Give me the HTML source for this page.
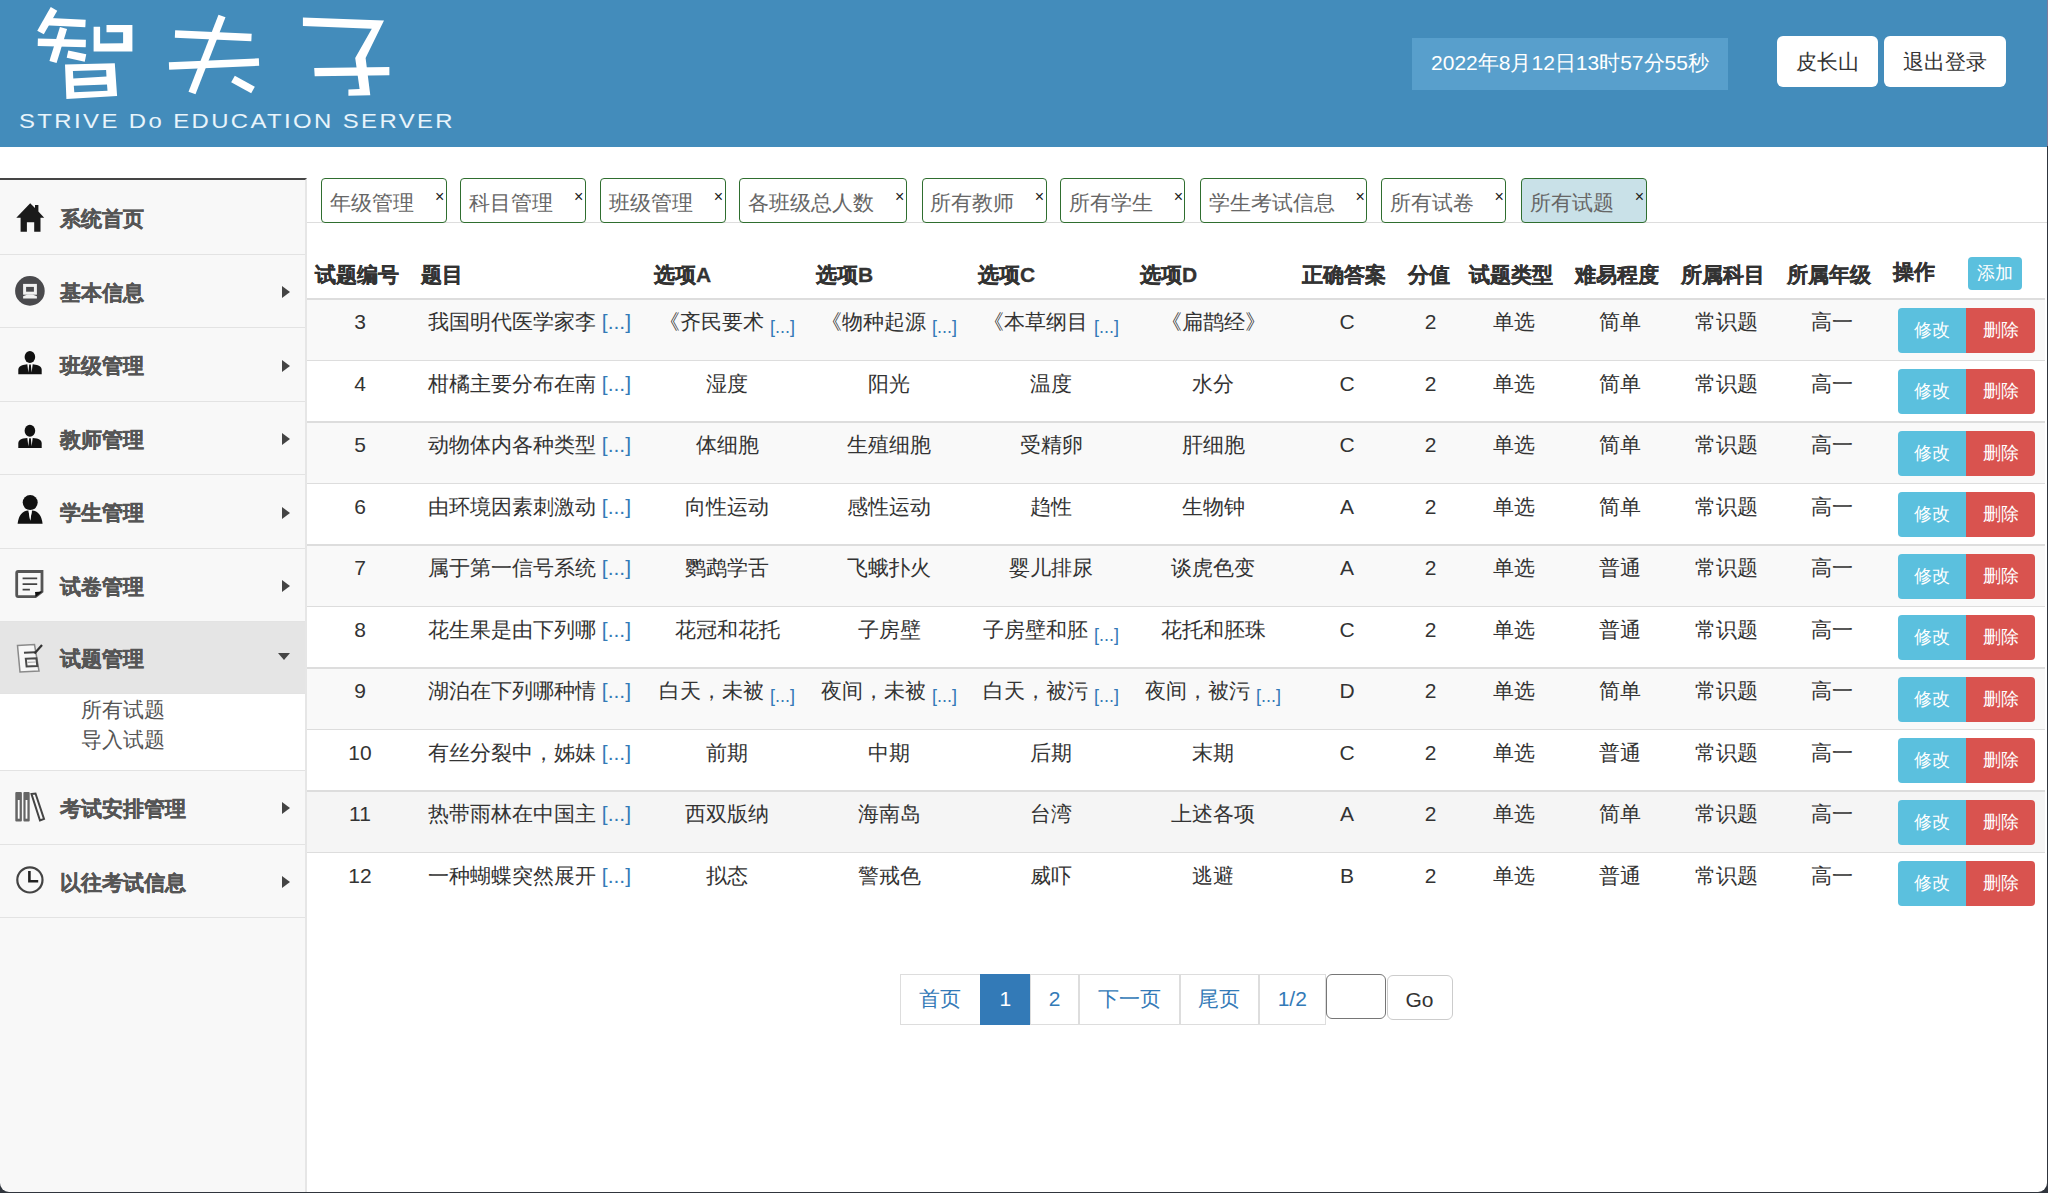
<!DOCTYPE html>
<html><head><meta charset="utf-8"><title>试题管理</title>
<style>
*{box-sizing:border-box;margin:0;padding:0}
html,body{width:2048px;height:1193px;overflow:hidden;background:#fff}
body{position:relative;font-family:"Liberation Sans",sans-serif;color:#333;font-size:21px}
.a{position:absolute}
.hdr{left:0;top:0;width:2048px;height:146.6px;background:#438cbb}
.datebox{left:1412px;top:38px;width:316px;height:52px;background:#589fcc;color:#fff;font-size:21px;line-height:50px;text-align:center;white-space:nowrap}
.hbtn{top:36px;height:51px;background:#fff;border-radius:6px;color:#333;font-size:21px;line-height:51px;text-align:center;white-space:nowrap}
.side{left:0;top:178px;width:307px;height:1015px;background:#f8f8f8;border-top:2px solid #454545;border-right:2px solid #e6e6e6}
.mi{left:0;width:305px;height:74px;border-bottom:1px solid #e3e3e3}
.mt{position:absolute;left:60px;top:1px;line-height:74px;font-weight:bold;color:#555;font-size:21px;white-space:nowrap;-webkit-text-stroke:0.35px #555}
.tri{position:absolute;left:282px;width:0;height:0;border-top:6px solid transparent;border-bottom:6px solid transparent;border-left:8px solid #444}
.sub{left:81px;color:#555;font-size:21px;line-height:30px;white-space:nowrap}
.tab{top:178px;height:45px;border:1.5px solid #2f6e2f;border-radius:4px;background:#fff;color:#666;font-size:21px;line-height:42px;white-space:nowrap}
.tab span{position:absolute;left:7.5px;top:3px}
.tab i{position:absolute;right:1.5px;top:8px;font-style:normal;color:#222;font-size:16px;line-height:20px}
.th{top:255px;line-height:40px;font-weight:bold;color:#333;font-size:21px;white-space:nowrap;-webkit-text-stroke:0.3px #333}
.cell{line-height:30px;text-align:center;white-space:nowrap;color:#333}
.lk{color:#337ab7}
.btn{height:45px;color:#fff;font-size:18px;line-height:45px;text-align:center;white-space:nowrap}
.pg{top:974px;height:50.5px;border:1px solid #ddd;color:#337ab7;font-size:21px;line-height:48px;text-align:center;white-space:nowrap;background:#fff}
</style></head><body>

<div class="a hdr"></div>
<svg class="a" style="left:0;top:0" width="480" height="146" viewBox="0 0 480 146">
<g fill="none" stroke="#fff" stroke-width="7.5" stroke-linecap="butt" stroke-linejoin="miter">
<path d="M54,8.8 L40.5,32.5"/>
<path d="M45,21.5 L85.5,23.5"/>
<path d="M37.8,42.2 L85.8,43.5"/>
<path d="M63.5,28 L53,62"/>
<path d="M67.5,54.2 L85.5,58"/>
<path d="M175,34 L251.5,37.5"/>
<path d="M169,66 L259,62"/>
<path d="M222,16 L192,93"/>
<path d="M233,79 L253,90"/>
</g>
<g fill="#fff">
<path fill-rule="evenodd" d="M65,64.5 L114.8,63.2 L117.1,95.9 L66.4,99.1 Z M72.9,71 L106.1,70.1 L106.5,76.5 L73.3,78.4 Z M73.8,85.8 L107,84.4 L107.5,90.8 L74.3,92.2 Z"/>
<path d="M93.6,26.7 L100.1,26.7 L100.1,43.5 L123.1,43.3 L123.1,32.3 L106.5,32.3 L106.5,24.9 L132.4,24.9 L132.4,51.6 L93.6,51.6 Z"/>
<path d="M302.9,17.6 L384,20.5 L365.6,58.1 L370.3,95.2 L348.4,95.7 L348.4,89.6 L359.6,88.9 L355.2,58.1 L371.8,28.8 L302.9,25.9 Z"/>
<path d="M314.2,67.9 L389.4,66.9 L389.4,75.2 L314.7,76.2 Z"/>

</g>
<text x="19" y="127.5" fill="#e8f4fb" font-family="Liberation Sans" font-size="20" textLength="436" lengthAdjust="spacingAndGlyphs" letter-spacing="2">STRIVE Do EDUCATION SERVER</text>
</svg>
<div class="a datebox">2022年8月12日13时57分55秒</div>
<div class="a hbtn" style="left:1777px;width:101px">皮长山</div>
<div class="a hbtn" style="left:1884px;width:122px">退出登录</div>
<div class="a side"></div>
<div class="a mi" style="top:181px;height:74px;"><div class="mt" style="line-height:74px">系统首页</div>
</div>
<div class="a mi" style="top:255px;height:73px;"><div class="mt" style="line-height:73px">基本信息</div>
<div class="tri" style="top:31.0px"></div>
</div>
<div class="a mi" style="top:328px;height:74px;"><div class="mt" style="line-height:74px">班级管理</div>
<div class="tri" style="top:31.5px"></div>
</div>
<div class="a mi" style="top:402px;height:73px;"><div class="mt" style="line-height:73px">教师管理</div>
<div class="tri" style="top:31.0px"></div>
</div>
<div class="a mi" style="top:475px;height:74px;"><div class="mt" style="line-height:74px">学生管理</div>
<div class="tri" style="top:31.5px"></div>
</div>
<div class="a mi" style="top:549px;height:73px;"><div class="mt" style="line-height:73px">试卷管理</div>
<div class="tri" style="top:31.0px"></div>
</div>
<div class="a mi" style="top:622px;height:72px;background:#e5e5e5;"><div class="mt" style="line-height:72px">试题管理</div>
<div class="tri" style="left:278px;top:31.0px;border-left:6px solid transparent;border-right:6px solid transparent;border-top:7px solid #444;border-bottom:0"></div>
</div>
<div class="a mi" style="top:771px;height:73.5px;"><div class="mt" style="line-height:73.5px">考试安排管理</div>
<div class="tri" style="top:31.25px"></div>
</div>
<div class="a mi" style="top:844.5px;height:73.5px;"><div class="mt" style="line-height:73.5px">以往考试信息</div>
<div class="tri" style="top:31.25px"></div>
</div>
<div class="a" style="left:0;top:694px;width:305px;height:77px;background:#fff;border-bottom:1px solid #e3e3e3"></div>
<div class="a sub" style="top:695px">所有试题</div>
<div class="a sub" style="top:725px">导入试题</div>
<svg class="a" style="left:0;top:0" width="60" height="930" viewBox="0 0 60 930">
<path fill="#1a1a1a" d="M16.3,217.7 L30.2,203.3 L35,208 L35,205 L38.4,205 L38.4,211.5 L44.2,217.7 L40.5,217.7 L40.5,231.7 L34.2,231.7 L34.2,222.2 L26.9,222.2 L26.9,231.7 L20.6,231.7 L20.6,217.7 Z"/>
<circle cx="29.9" cy="290.9" r="14.8" fill="#4a4a4d"/>
<rect x="24.6" y="285.4" width="10.8" height="7.8" fill="none" stroke="#f0f0f0" stroke-width="3"/>
<path fill="#f0f0f0" d="M27.5,294.5 L32.5,294.5 L36.9,296.3 L36.9,298.6 L23.1,298.6 L23.1,296.3 Z"/>
<g fill="#111">
<ellipse cx="29.9" cy="357.1" rx="5.3" ry="6"/>
<path d="M18.3,374.3 L18.3,369.5 Q18.5,366 23,365 L27.3,364.3 L28.6,374.3 Z M29.2,364.6 L30.8,364.6 L31.8,374.3 L28.2,374.3 Z M32.7,364.3 L37,365 Q41.5,366 41.7,369.5 L41.7,374.3 L31.4,374.3 Z"/>
<ellipse cx="29.9" cy="430.7" rx="5.3" ry="6"/>
<path d="M18.3,447.9 L18.3,443.1 Q18.5,439.6 23,438.6 L27.3,437.9 L28.6,447.9 Z M29.2,438.2 L30.8,438.2 L31.8,447.9 L28.2,447.9 Z M32.7,437.9 L37,438.6 Q41.5,439.6 41.7,443.1 L41.7,447.9 L31.4,447.9 Z"/>
<circle cx="30.2" cy="502.6" r="7.5"/>
<path d="M17.6,523.8 Q19,511 28.4,510.4 L30.2,520.8 L32,510.4 Q41.2,511 42.6,523.8 Z"/>
</g>
<path fill="#fff" d="M28.7,511.3 L31.7,511.3 L30.2,520.5 Z"/>
<g fill="none" stroke="#555" stroke-width="2.8">
<path d="M16.7,573 Q16.7,571.5 18.2,571.5 L42,571.5 L42,591.5 L35.5,596.6 L18.2,596.6 Q16.7,596.6 16.7,595 Z"/>
</g>
<path fill="#111" d="M35,592 L42.5,591.5 L35.6,597 Z"/>
<g stroke="#444" stroke-width="1.8"><path d="M22.6,578.4 L37.2,578.4 M22.6,584.2 L37.2,584.2 M22.6,589.7 L29.9,589.7"/></g>
<path d="M17.5,645.5 L34.5,644.5 L39,671 L20,672 Z" fill="#f7f7f7" stroke="#8a8a8a" stroke-width="1.5"/>
<path d="M24,652.8 L35,652.3" stroke="#444" stroke-width="2"/>
<path d="M25.8,658.8 L36.4,658.3 L37.3,666 L26.6,666.5 Z" fill="none" stroke="#4a4a4a" stroke-width="2"/>
<path d="M27.5,662.3 L35.8,662" stroke="#aaa" stroke-width="1.2"/>
<path d="M42,645 L34.5,653.5" stroke="#333" stroke-width="2.2"/>
<g fill="#666">
<rect x="15.3" y="792.1" width="6.6" height="29.4" rx="1"/>
<rect x="23.4" y="792.1" width="6.3" height="29.4" rx="1"/>
</g>
<g fill="#fff"><rect x="17.8" y="800" width="1.8" height="18.7"/><rect x="25.6" y="800" width="1.8" height="18.7"/></g>
<path d="M31.5,794 L35.5,793.5 L44,819 L40,820.5 Z" fill="none" stroke="#444" stroke-width="2"/>
<circle cx="29.9" cy="879.9" r="12.6" fill="none" stroke="#444" stroke-width="2.2"/>
<path d="M29.4,871.1 L29.4,881.3 L38.2,881.3" fill="none" stroke="#222" stroke-width="2.6"/>
</svg>
<div class="a" style="left:307px;top:221.5px;width:1741px;height:1.5px;background:#ddd"></div>
<div class="a tab" style="left:321.2px;width:125.69999999999999px;"><span>年级管理</span><i>×</i></div>
<div class="a tab" style="left:460.3px;width:125.49999999999994px;"><span>科目管理</span><i>×</i></div>
<div class="a tab" style="left:600.4px;width:125.20000000000005px;"><span>班级管理</span><i>×</i></div>
<div class="a tab" style="left:739.3px;width:167.5px;"><span>各班级总人数</span><i>×</i></div>
<div class="a tab" style="left:921.5px;width:125.0px;"><span>所有教师</span><i>×</i></div>
<div class="a tab" style="left:1060.2px;width:125.29999999999995px;"><span>所有学生</span><i>×</i></div>
<div class="a tab" style="left:1200.4px;width:167.0px;"><span>学生考试信息</span><i>×</i></div>
<div class="a tab" style="left:1381.4px;width:125.0px;"><span>所有试卷</span><i>×</i></div>
<div class="a tab" style="left:1521.3px;width:125.40000000000009px;background:#c9e1e8;"><span>所有试题</span><i>×</i></div>
<div class="a th" style="left:315px">试题编号</div>
<div class="a th" style="left:421px">题目</div>
<div class="a th" style="left:654px">选项A</div>
<div class="a th" style="left:816px">选项B</div>
<div class="a th" style="left:978px">选项C</div>
<div class="a th" style="left:1140px">选项D</div>
<div class="a th" style="left:1302px">正确答案</div>
<div class="a th" style="left:1408px">分值</div>
<div class="a th" style="left:1469px">试题类型</div>
<div class="a th" style="left:1575px">难易程度</div>
<div class="a th" style="left:1681px">所属科目</div>
<div class="a th" style="left:1787px">所属年级</div>
<div class="a th" style="left:1893px;top:252px">操作</div>
<div class="a btn" style="left:1968px;top:257px;width:54px;height:33px;line-height:33px;background:#5bc0de;border-radius:4px">添加</div>
<div class="a" style="left:307px;top:297.5px;width:1738px;height:2px;background:#ddd"></div>
<div class="a" style="left:307px;top:299.5px;width:1738px;height:61.5px;background:#f9f9f9"></div>
<div class="a" style="left:307px;top:359.5px;width:1738px;height:1.5px;background:#ddd"></div>
<div class="a cell" style="left:307px;top:307.0px;width:106px">3</div>
<div class="a cell" style="left:413px;top:307.0px;width:233px">我国明代医学家李 <span class="lk">[...]</span></div>
<div class="a cell" style="left:646px;top:307.0px;width:162px">《齐民要术 <span class="lk" style="font-size:18px;position:relative;top:4px">[...]</span></div>
<div class="a cell" style="left:808px;top:307.0px;width:162px">《物种起源 <span class="lk" style="font-size:18px;position:relative;top:4px">[...]</span></div>
<div class="a cell" style="left:970px;top:307.0px;width:162px">《本草纲目 <span class="lk" style="font-size:18px;position:relative;top:4px">[...]</span></div>
<div class="a cell" style="left:1132px;top:307.0px;width:162px">《扁鹊经》</div>
<div class="a cell" style="left:1294px;top:307.0px;width:106px">C</div>
<div class="a cell" style="left:1400px;top:307.0px;width:61px">2</div>
<div class="a cell" style="left:1461px;top:307.0px;width:106px">单选</div>
<div class="a cell" style="left:1567px;top:307.0px;width:106px">简单</div>
<div class="a cell" style="left:1673px;top:307.0px;width:106px">常识题</div>
<div class="a cell" style="left:1779px;top:307.0px;width:106px">高一</div>
<div class="a btn" style="left:1898px;top:307.75px;width:68px;background:#5bc0de;border-radius:4px 0 0 4px">修改</div>
<div class="a btn" style="left:1966px;top:307.75px;width:69px;background:#d9534f;border-radius:0 4px 4px 0">删除</div>
<div class="a" style="left:307px;top:361.0px;width:1738px;height:61.5px;background:#fff"></div>
<div class="a" style="left:307px;top:421.0px;width:1738px;height:1.5px;background:#ddd"></div>
<div class="a cell" style="left:307px;top:368.5px;width:106px">4</div>
<div class="a cell" style="left:413px;top:368.5px;width:233px">柑橘主要分布在南 <span class="lk">[...]</span></div>
<div class="a cell" style="left:646px;top:368.5px;width:162px">湿度</div>
<div class="a cell" style="left:808px;top:368.5px;width:162px">阳光</div>
<div class="a cell" style="left:970px;top:368.5px;width:162px">温度</div>
<div class="a cell" style="left:1132px;top:368.5px;width:162px">水分</div>
<div class="a cell" style="left:1294px;top:368.5px;width:106px">C</div>
<div class="a cell" style="left:1400px;top:368.5px;width:61px">2</div>
<div class="a cell" style="left:1461px;top:368.5px;width:106px">单选</div>
<div class="a cell" style="left:1567px;top:368.5px;width:106px">简单</div>
<div class="a cell" style="left:1673px;top:368.5px;width:106px">常识题</div>
<div class="a cell" style="left:1779px;top:368.5px;width:106px">高一</div>
<div class="a btn" style="left:1898px;top:369.25px;width:68px;background:#5bc0de;border-radius:4px 0 0 4px">修改</div>
<div class="a btn" style="left:1966px;top:369.25px;width:69px;background:#d9534f;border-radius:0 4px 4px 0">删除</div>
<div class="a" style="left:307px;top:422.5px;width:1738px;height:61.5px;background:#f9f9f9"></div>
<div class="a" style="left:307px;top:482.5px;width:1738px;height:1.5px;background:#ddd"></div>
<div class="a cell" style="left:307px;top:430.0px;width:106px">5</div>
<div class="a cell" style="left:413px;top:430.0px;width:233px">动物体内各种类型 <span class="lk">[...]</span></div>
<div class="a cell" style="left:646px;top:430.0px;width:162px">体细胞</div>
<div class="a cell" style="left:808px;top:430.0px;width:162px">生殖细胞</div>
<div class="a cell" style="left:970px;top:430.0px;width:162px">受精卵</div>
<div class="a cell" style="left:1132px;top:430.0px;width:162px">肝细胞</div>
<div class="a cell" style="left:1294px;top:430.0px;width:106px">C</div>
<div class="a cell" style="left:1400px;top:430.0px;width:61px">2</div>
<div class="a cell" style="left:1461px;top:430.0px;width:106px">单选</div>
<div class="a cell" style="left:1567px;top:430.0px;width:106px">简单</div>
<div class="a cell" style="left:1673px;top:430.0px;width:106px">常识题</div>
<div class="a cell" style="left:1779px;top:430.0px;width:106px">高一</div>
<div class="a btn" style="left:1898px;top:430.75px;width:68px;background:#5bc0de;border-radius:4px 0 0 4px">修改</div>
<div class="a btn" style="left:1966px;top:430.75px;width:69px;background:#d9534f;border-radius:0 4px 4px 0">删除</div>
<div class="a" style="left:307px;top:484.0px;width:1738px;height:61.5px;background:#fff"></div>
<div class="a" style="left:307px;top:544.0px;width:1738px;height:1.5px;background:#ddd"></div>
<div class="a cell" style="left:307px;top:491.5px;width:106px">6</div>
<div class="a cell" style="left:413px;top:491.5px;width:233px">由环境因素刺激动 <span class="lk">[...]</span></div>
<div class="a cell" style="left:646px;top:491.5px;width:162px">向性运动</div>
<div class="a cell" style="left:808px;top:491.5px;width:162px">感性运动</div>
<div class="a cell" style="left:970px;top:491.5px;width:162px">趋性</div>
<div class="a cell" style="left:1132px;top:491.5px;width:162px">生物钟</div>
<div class="a cell" style="left:1294px;top:491.5px;width:106px">A</div>
<div class="a cell" style="left:1400px;top:491.5px;width:61px">2</div>
<div class="a cell" style="left:1461px;top:491.5px;width:106px">单选</div>
<div class="a cell" style="left:1567px;top:491.5px;width:106px">简单</div>
<div class="a cell" style="left:1673px;top:491.5px;width:106px">常识题</div>
<div class="a cell" style="left:1779px;top:491.5px;width:106px">高一</div>
<div class="a btn" style="left:1898px;top:492.25px;width:68px;background:#5bc0de;border-radius:4px 0 0 4px">修改</div>
<div class="a btn" style="left:1966px;top:492.25px;width:69px;background:#d9534f;border-radius:0 4px 4px 0">删除</div>
<div class="a" style="left:307px;top:545.5px;width:1738px;height:61.5px;background:#f9f9f9"></div>
<div class="a" style="left:307px;top:605.5px;width:1738px;height:1.5px;background:#ddd"></div>
<div class="a cell" style="left:307px;top:553.0px;width:106px">7</div>
<div class="a cell" style="left:413px;top:553.0px;width:233px">属于第一信号系统 <span class="lk">[...]</span></div>
<div class="a cell" style="left:646px;top:553.0px;width:162px">鹦鹉学舌</div>
<div class="a cell" style="left:808px;top:553.0px;width:162px">飞蛾扑火</div>
<div class="a cell" style="left:970px;top:553.0px;width:162px">婴儿排尿</div>
<div class="a cell" style="left:1132px;top:553.0px;width:162px">谈虎色变</div>
<div class="a cell" style="left:1294px;top:553.0px;width:106px">A</div>
<div class="a cell" style="left:1400px;top:553.0px;width:61px">2</div>
<div class="a cell" style="left:1461px;top:553.0px;width:106px">单选</div>
<div class="a cell" style="left:1567px;top:553.0px;width:106px">普通</div>
<div class="a cell" style="left:1673px;top:553.0px;width:106px">常识题</div>
<div class="a cell" style="left:1779px;top:553.0px;width:106px">高一</div>
<div class="a btn" style="left:1898px;top:553.75px;width:68px;background:#5bc0de;border-radius:4px 0 0 4px">修改</div>
<div class="a btn" style="left:1966px;top:553.75px;width:69px;background:#d9534f;border-radius:0 4px 4px 0">删除</div>
<div class="a" style="left:307px;top:607.0px;width:1738px;height:61.5px;background:#fff"></div>
<div class="a" style="left:307px;top:667.0px;width:1738px;height:1.5px;background:#ddd"></div>
<div class="a cell" style="left:307px;top:614.5px;width:106px">8</div>
<div class="a cell" style="left:413px;top:614.5px;width:233px">花生果是由下列哪 <span class="lk">[...]</span></div>
<div class="a cell" style="left:646px;top:614.5px;width:162px">花冠和花托</div>
<div class="a cell" style="left:808px;top:614.5px;width:162px">子房壁</div>
<div class="a cell" style="left:970px;top:614.5px;width:162px">子房壁和胚 <span class="lk" style="font-size:18px;position:relative;top:4px">[...]</span></div>
<div class="a cell" style="left:1132px;top:614.5px;width:162px">花托和胚珠</div>
<div class="a cell" style="left:1294px;top:614.5px;width:106px">C</div>
<div class="a cell" style="left:1400px;top:614.5px;width:61px">2</div>
<div class="a cell" style="left:1461px;top:614.5px;width:106px">单选</div>
<div class="a cell" style="left:1567px;top:614.5px;width:106px">普通</div>
<div class="a cell" style="left:1673px;top:614.5px;width:106px">常识题</div>
<div class="a cell" style="left:1779px;top:614.5px;width:106px">高一</div>
<div class="a btn" style="left:1898px;top:615.25px;width:68px;background:#5bc0de;border-radius:4px 0 0 4px">修改</div>
<div class="a btn" style="left:1966px;top:615.25px;width:69px;background:#d9534f;border-radius:0 4px 4px 0">删除</div>
<div class="a" style="left:307px;top:668.5px;width:1738px;height:61.5px;background:#f9f9f9"></div>
<div class="a" style="left:307px;top:728.5px;width:1738px;height:1.5px;background:#ddd"></div>
<div class="a cell" style="left:307px;top:676.0px;width:106px">9</div>
<div class="a cell" style="left:413px;top:676.0px;width:233px">湖泊在下列哪种情 <span class="lk">[...]</span></div>
<div class="a cell" style="left:646px;top:676.0px;width:162px">白天，未被 <span class="lk" style="font-size:18px;position:relative;top:4px">[...]</span></div>
<div class="a cell" style="left:808px;top:676.0px;width:162px">夜间，未被 <span class="lk" style="font-size:18px;position:relative;top:4px">[...]</span></div>
<div class="a cell" style="left:970px;top:676.0px;width:162px">白天，被污 <span class="lk" style="font-size:18px;position:relative;top:4px">[...]</span></div>
<div class="a cell" style="left:1132px;top:676.0px;width:162px">夜间，被污 <span class="lk" style="font-size:18px;position:relative;top:4px">[...]</span></div>
<div class="a cell" style="left:1294px;top:676.0px;width:106px">D</div>
<div class="a cell" style="left:1400px;top:676.0px;width:61px">2</div>
<div class="a cell" style="left:1461px;top:676.0px;width:106px">单选</div>
<div class="a cell" style="left:1567px;top:676.0px;width:106px">简单</div>
<div class="a cell" style="left:1673px;top:676.0px;width:106px">常识题</div>
<div class="a cell" style="left:1779px;top:676.0px;width:106px">高一</div>
<div class="a btn" style="left:1898px;top:676.75px;width:68px;background:#5bc0de;border-radius:4px 0 0 4px">修改</div>
<div class="a btn" style="left:1966px;top:676.75px;width:69px;background:#d9534f;border-radius:0 4px 4px 0">删除</div>
<div class="a" style="left:307px;top:730.0px;width:1738px;height:61.5px;background:#fff"></div>
<div class="a" style="left:307px;top:790.0px;width:1738px;height:1.5px;background:#ddd"></div>
<div class="a cell" style="left:307px;top:737.5px;width:106px">10</div>
<div class="a cell" style="left:413px;top:737.5px;width:233px">有丝分裂中，姊妹 <span class="lk">[...]</span></div>
<div class="a cell" style="left:646px;top:737.5px;width:162px">前期</div>
<div class="a cell" style="left:808px;top:737.5px;width:162px">中期</div>
<div class="a cell" style="left:970px;top:737.5px;width:162px">后期</div>
<div class="a cell" style="left:1132px;top:737.5px;width:162px">末期</div>
<div class="a cell" style="left:1294px;top:737.5px;width:106px">C</div>
<div class="a cell" style="left:1400px;top:737.5px;width:61px">2</div>
<div class="a cell" style="left:1461px;top:737.5px;width:106px">单选</div>
<div class="a cell" style="left:1567px;top:737.5px;width:106px">普通</div>
<div class="a cell" style="left:1673px;top:737.5px;width:106px">常识题</div>
<div class="a cell" style="left:1779px;top:737.5px;width:106px">高一</div>
<div class="a btn" style="left:1898px;top:738.25px;width:68px;background:#5bc0de;border-radius:4px 0 0 4px">修改</div>
<div class="a btn" style="left:1966px;top:738.25px;width:69px;background:#d9534f;border-radius:0 4px 4px 0">删除</div>
<div class="a" style="left:307px;top:791.5px;width:1738px;height:61.5px;background:#f5f5f5"></div>
<div class="a" style="left:307px;top:851.5px;width:1738px;height:1.5px;background:#ddd"></div>
<div class="a cell" style="left:307px;top:799.0px;width:106px">11</div>
<div class="a cell" style="left:413px;top:799.0px;width:233px">热带雨林在中国主 <span class="lk">[...]</span></div>
<div class="a cell" style="left:646px;top:799.0px;width:162px">西双版纳</div>
<div class="a cell" style="left:808px;top:799.0px;width:162px">海南岛</div>
<div class="a cell" style="left:970px;top:799.0px;width:162px">台湾</div>
<div class="a cell" style="left:1132px;top:799.0px;width:162px">上述各项</div>
<div class="a cell" style="left:1294px;top:799.0px;width:106px">A</div>
<div class="a cell" style="left:1400px;top:799.0px;width:61px">2</div>
<div class="a cell" style="left:1461px;top:799.0px;width:106px">单选</div>
<div class="a cell" style="left:1567px;top:799.0px;width:106px">简单</div>
<div class="a cell" style="left:1673px;top:799.0px;width:106px">常识题</div>
<div class="a cell" style="left:1779px;top:799.0px;width:106px">高一</div>
<div class="a btn" style="left:1898px;top:799.75px;width:68px;background:#5bc0de;border-radius:4px 0 0 4px">修改</div>
<div class="a btn" style="left:1966px;top:799.75px;width:69px;background:#d9534f;border-radius:0 4px 4px 0">删除</div>
<div class="a" style="left:307px;top:853.0px;width:1738px;height:61.5px;background:#fff"></div>
<div class="a cell" style="left:307px;top:860.5px;width:106px">12</div>
<div class="a cell" style="left:413px;top:860.5px;width:233px">一种蝴蝶突然展开 <span class="lk">[...]</span></div>
<div class="a cell" style="left:646px;top:860.5px;width:162px">拟态</div>
<div class="a cell" style="left:808px;top:860.5px;width:162px">警戒色</div>
<div class="a cell" style="left:970px;top:860.5px;width:162px">威吓</div>
<div class="a cell" style="left:1132px;top:860.5px;width:162px">逃避</div>
<div class="a cell" style="left:1294px;top:860.5px;width:106px">B</div>
<div class="a cell" style="left:1400px;top:860.5px;width:61px">2</div>
<div class="a cell" style="left:1461px;top:860.5px;width:106px">单选</div>
<div class="a cell" style="left:1567px;top:860.5px;width:106px">普通</div>
<div class="a cell" style="left:1673px;top:860.5px;width:106px">常识题</div>
<div class="a cell" style="left:1779px;top:860.5px;width:106px">高一</div>
<div class="a btn" style="left:1898px;top:861.25px;width:68px;background:#5bc0de;border-radius:4px 0 0 4px">修改</div>
<div class="a btn" style="left:1966px;top:861.25px;width:69px;background:#d9534f;border-radius:0 4px 4px 0">删除</div>
<div class="a pg" style="left:900px;width:80.5px;">首页</div>
<div class="a pg" style="left:980px;width:50.5px;background:#337ab7;border-color:#337ab7;color:#fff;">1</div>
<div class="a pg" style="left:1030px;width:49px;">2</div>
<div class="a pg" style="left:1078.5px;width:101.5px;">下一页</div>
<div class="a pg" style="left:1179.5px;width:79.5px;">尾页</div>
<div class="a pg" style="left:1258.5px;width:67.5px;">1/2</div>
<div class="a" style="left:1326px;top:974px;width:60px;height:45px;border:1.5px solid #767676;border-radius:6px;background:#fff"></div>
<div class="a" style="left:1386.5px;top:975px;width:66px;height:45px;border:1.5px solid #ccc;border-radius:6px;background:#fff;color:#333;font-size:21px;line-height:48px;text-align:center">Go</div>
<div class="a" style="left:0;top:0;width:2048px;height:1193px;overflow:hidden;pointer-events:none"><div style="position:absolute;left:0;top:0;width:2047px;height:1192px;border-radius:0 0 9px 9px;box-shadow:0 0 0 12px #30353d"></div><div style="position:absolute;left:2047px;top:0;width:1px;height:146px;background:#7a7b9c"></div></div>
</body></html>
